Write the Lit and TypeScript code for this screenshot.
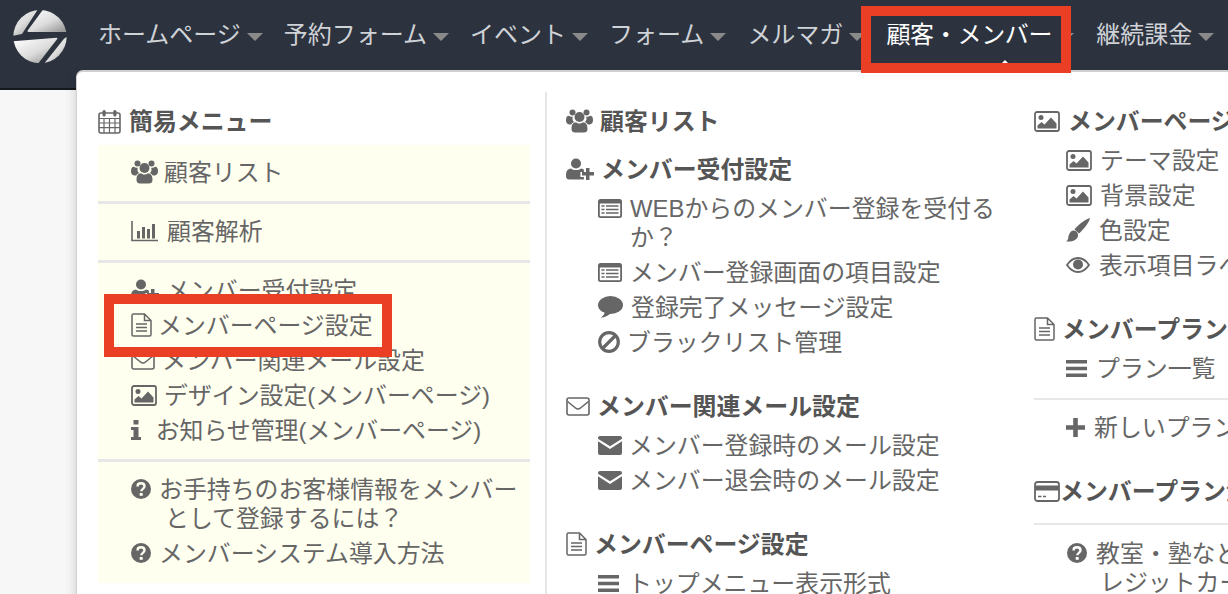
import { LitElement, html, css, svg } from "lit";
import { customElement } from "lit/decorators.js";

const C = "#666";
type Ic = { w: number; h: number; vb: string; gap: number; body: any };
const ICONS: Record<string, Ic> = {
  calendar: { w: 23, h: 25, vb: "0 0 23 25", gap: 8, body: svg`<rect x="1" y="4" width="21" height="20" rx="2" fill="none" stroke="${C}" stroke-width="1.6"/><path d="M1 9.5h21M1 14h21M1 18.7h21M6 9.5V24M11.5 9.5V24M17 9.5V24" fill="none" stroke="${C}" stroke-width="1.2"/><rect x="4.5" y="1" width="3.2" height="6.5" rx="1.5" fill="${C}"/><rect x="15.3" y="1" width="3.2" height="6.5" rx="1.5" fill="${C}"/>` },
  users: { w: 27, h: 24, vb: "0 0 27 24", gap: 6, body: svg`<g fill="${C}"><circle cx="13.5" cy="8" r="5"/><path d="M5.5 20c0-5 1.700-6.500 4.500-6.800 1 .8 2.200 1.300 3.500 1.300s2.500-.5 3.500-1.300c2.800.3 4.500 1.800 4.500 6.800 0 2.500-1.500 3.500-3.500 3.500H9c-2 0-3.500-1-3.500-3.500z"/><circle cx="6.500" cy="3.400" r="3"/><circle cx="20.500" cy="3.400" r="3"/><path d="M0 11c0-3 1-4.200 3-4.300.7.600 1.500 1 2.600 1h1.200c-.8 2.500 0 4.500 1.500 5.300-1.500.5-2.500 1.500-3.100 2.600C2 15.600 0 14.600 0 11zM27 11c0-3-1-4.200-3-4.300-.7.600-1.500 1-2.600 1h-1.200c.8 2.500 0 4.500-1.500 5.300 1.500.5 2.500 1.500 3.100 2.600C25 15.600 27 14.600 27 11z"/></g>` },
  userPlus: { w: 28, h: 22, vb: "0 0 28 22", gap: 7, body: svg`<g fill="${C}"><circle cx="10" cy="5.500" r="5"/><path d="M0 18c0-5 1.500-7 5-7.500 1.200 1 3 1.600 5 1.600s3.800-.6 5-1.600c1.200.2 2.100.5 2.900 1.100V14h-3.500v5h3.500v2.500H3c-2 0-3-1.300-3-3.500z"/><path d="M20 10h3.500v4H28v3.500h-4.500V22H20v-4.500h-4V14h4z"/></g>` },
  chart: { w: 27, h: 22, vb: "0 0 27 22", gap: 9, body: svg`<path d="M1 1v19.500h26" fill="none" stroke="${C}" stroke-width="1.600"/><g fill="${C}"><rect x="6" y="11" width="3" height="7.500"/><rect x="11" y="7" width="3" height="11.500"/><rect x="16" y="9" width="3" height="9.500"/><rect x="21" y="4" width="3" height="14.500"/></g>` },
  file: { w: 21, h: 24, vb: "0 0 21 24", gap: 7, body: svg`<path d="M1 2.500A1.500 1.500 0 0 1 2.500 1H13.500L20 7.500V21.500A1.500 1.500 0 0 1 18.500 23H2.500A1.500 1.500 0 0 1 1 21.500zM13.500 1V7.500H20" fill="none" stroke="${C}" stroke-width="1.500"/><path d="M5 11h11M5 14.500h11M5 18h11" stroke="${C}" stroke-width="1.500"/>` },
  mail: { w: 24, h: 19, vb: "0 0 24 19", gap: 7, body: svg`<rect x="1" y="1" width="22" height="17" rx="2" fill="none" stroke="${C}" stroke-width="1.600"/><path d="M1.500 4.500L9.500 11c1.500 1.200 3.500 1.200 5 0L22.500 4.500" fill="none" stroke="${C}" stroke-width="1.600"/>` },
  mailFill: { w: 24, h: 19, vb: "0 0 24 19", gap: 7, body: svg`<path d="M0 5.200L12 13l12-7.800V17a2 2 0 0 1-2 2H2a2 2 0 0 1-2-2zM2 0h20a2 2 0 0 1 2 2v.8L12 10.300 0 2.800V2a2 2 0 0 1 2-2z" fill="${C}"/>` },
  pic: { w: 26, h: 21, vb: "0 0 26 21", gap: 8, body: svg`<rect x="1" y="1" width="24" height="19" rx="2" fill="none" stroke="${C}" stroke-width="1.800"/><circle cx="7" cy="6.500" r="2.500" fill="${C}"/><path d="M3.500 17.500v-3l4-3.500 3 2.500 6.500-7 5.500 6v5z" fill="${C}"/>` },
  info: { w: 10, h: 20, vb: "0 0 10 20", gap: 8, body: svg`<path d="M2.500 0h5v4.500h-5zM0 7h7.500v10H10v3H0v-3h2.500v-7H0z" fill="${C}"/>` },
  question: { w: 20, h: 20, vb: "0 0 20 20", gap: 8, body: svg`<circle cx="10" cy="10" r="10" fill="${C}"/><path d="M6.500 7.500c0-2 1.600-3.200 3.500-3.200s3.500 1.200 3.500 3c0 2.600-3.200 2.500-3.200 5" fill="none" stroke="#fffff0" stroke-width="2.400"/><rect x="8.700" y="14" width="3" height="2.800" fill="#fffff0"/>` },
  questionW: { w: 20, h: 20, vb: "0 0 20 20", gap: 9, body: svg`<circle cx="10" cy="10" r="10" fill="${C}"/><path d="M6.500 7.500c0-2 1.600-3.200 3.500-3.200s3.500 1.200 3.500 3c0 2.600-3.200 2.500-3.200 5" fill="none" stroke="#fff" stroke-width="2.400"/><rect x="8.700" y="14" width="3" height="2.800" fill="#fff"/>` },
  list: { w: 24, h: 19, vb: "0 0 24 19", gap: 8, body: svg`<rect width="24" height="19" rx="2.500" fill="${C}"/><rect x="1.800" y="4.500" width="20.400" height="12.700" fill="#fff"/><path d="M3.500 7h3M3.500 10.500h3M3.500 14h3M8 7h12.500M8 10.500h12.500M8 14h12.500" stroke="${C}" stroke-width="1.700"/>` },
  comment: { w: 25, h: 22, vb: "0 0 25 22", gap: 8, body: svg`<ellipse cx="12.500" cy="9" rx="12.500" ry="9" fill="${C}"/><path d="M7 15c0 2.500-1.500 4.500-4 6.800 3.500-.5 7.500-2 10-4.800z" fill="${C}"/>` },
  ban: { w: 22, h: 22, vb: "0 0 22 22", gap: 7, body: svg`<circle cx="11" cy="11" r="9.300" fill="none" stroke="${C}" stroke-width="3.200"/><path d="M4.500 17.500L17.500 4.500" stroke="${C}" stroke-width="3.200"/>` },
  bars: { w: 21, h: 17, vb: "0 0 21 17", gap: 9, body: svg`<path d="M0 0h21v3.500H0zM0 6.700h21v3.500H0zM0 13.500h21V17H0z" fill="${C}"/>` },
  brush: { w: 24, h: 24, vb: "0 0 24 24", gap: 9, body: svg`<path d="M24 0c0 3-6 11-11 15.500l-4.500-4C12 6.500 21 .5 24 0z" fill="${C}"/><path d="M7.500 12.500c3 .2 5 2.500 4.500 5.500-.6 3.700-5 6-12 5.500 3.200-2 1.500-4 3.200-7.300C4.100 14 5.700 12.500 7.500 12.500z" fill="${C}"/>` },
  eye: { w: 24, h: 16, vb: "0 0 24 16", gap: 9, body: svg`<path d="M1 8c3-4.500 6.800-7 11-7s8 2.500 11 7c-3 4.500-6.800 7-11 7S4 12.500 1 8z" fill="none" stroke="${C}" stroke-width="1.800"/><circle cx="12" cy="7.500" r="5" fill="${C}"/>` },
  plus: { w: 19, h: 19, vb: "0 0 19 19", gap: 9, body: svg`<path d="M7.200 0h4.600v7.200H19v4.600h-7.200V19H7.200v-7.200H0V7.200h7.200z" fill="${C}"/>` },
  card: { w: 26, h: 21, vb: "0 0 26 21", gap: 0, body: svg`<rect x="1" y="1" width="24" height="19" rx="2.500" fill="none" stroke="${C}" stroke-width="1.800"/><rect x="1" y="4.500" width="24" height="5" fill="${C}"/><path d="M4 15.500h3.500M9 15.500h3" stroke="${C}" stroke-width="1.500"/>` },
};

const ic = (name: string, gap?: number) => {
  const i = ICONS[name];
  return html`<svg class="ic" width=${i.w} height=${i.h} viewBox=${i.vb} style="vertical-align:${9 - i.h / 2}px;margin-right:${gap ?? i.gap}px">${i.body}</svg>`;
};

const NAV = ["ホームページ", "予約フォーム", "イベント", "フォーム", "メルマガ", "顧客・メンバー", "継続課金"];

@customElement("app-root")
export class AppRoot extends LitElement {
  static styles = css`
    :host {
      display: block;
      width: 1228px;
      height: 594px;
      overflow: hidden;
      position: relative;
      background: #f7f7f7;
      font-family: "Liberation Sans", "Noto Sans CJK JP", sans-serif;
      font-size: 24px;
      line-height: 29px;
      color: #666;
    }
    svg { display: inline-block; }
    header {
      height: 88px;
      background: #2c333f;
      border-bottom: 2px solid #15181d;
      display: flex;
      align-items: flex-start;
      white-space: nowrap;
    }
    .logo { margin: 4px 26px 0 8px; flex: none; }
    nav { display: flex; gap: 21px; padding-top: 20px; }
    .nav-item {
      display: flex;
      align-items: center;
      gap: 6px;
      color: #cfd2d6;
      position: relative;
    }
    .caret {
      width: 0; height: 0;
      border-left: 8px solid transparent;
      border-right: 8px solid transparent;
      border-top: 8px solid #8a8a8a;
      margin-top: 4px;
      position: relative;
    }
    .nav-item.on { color: #fff; z-index: 2; letter-spacing: -0.3px; margin-right: 1px; }
    .nav-item.on .caret { z-index: -2; }
    .nav-item.on::before {
      content: "";
      position: absolute;
      z-index: -1;
      left: -25px;
      top: -14px;
      width: 190px;
      height: 47px;
      border: 10px solid #ea3f24;
      background: #2c333f;
    }
    .cursor {
      position: absolute;
      left: 116px;
      top: 40px;
      width: 0; height: 0;
      border-left: 3px solid transparent;
      border-right: 3px solid transparent;
      border-bottom: 3px solid #fff;
    }
    .panel {
      position: absolute;
      left: 76px;
      top: 70px;
      width: 1300px;
      height: 700px;
      box-sizing: border-box;
      background: #fff;
      border: 1px solid #d0d0d0;
      border-top-width: 2px;
      border-radius: 7px;
      box-shadow: 0 6px 12px rgba(0, 0, 0, .18);
      z-index: 1;
      display: flex;
      padding: 20px 0 0 21px;
      font-size: 23.9px;
    }
    .col1 { width: 432px; flex: none; padding-top: 15px; }
    .col2 {
      width: 455px;
      flex: none;
      margin-left: 15px;
      padding: 15px 0 0 19px;
      border-left: 2px solid #e5e5e5;
    }
    .col3 { width: 266px; flex: none; margin-left: 13px; padding-top: 15px; }
    .title { font-weight: bold; color: #555; margin-bottom: 10px; white-space: nowrap; }
    .title.solo { margin-bottom: 19px; }
    .cream {
      background: #fffff0;
      height: 438px;
      box-sizing: border-box;
      margin-top: -1px;
      padding-top: 13px;
    }
    .sec { padding: 0 0 0 33px; }
    .row { margin: 0 0 6px; position: relative; }
    .sub { padding-left: 64px; text-indent: -32px; }
    .subw { padding-left: 34px; text-indent: -34px; }
    .subx { padding-left: 66px; text-indent: -33px; }
    .ic { text-indent: 0; }
    hr { border: 0; height: 3px; background: #e7e7e7; margin: 14px 0 13px; }
    .col3 hr { height: 2px; margin: 15px 0 13px; }
    .col3 .title + hr { margin: 17px 0 14px; }
    .group { margin-bottom: 35px; }
    .nw { white-space: nowrap; }
    .mark { z-index: 1; white-space: nowrap; }
    .mark::before {
      content: "";
      position: absolute;
      z-index: -1;
      left: -27px;
      top: -17px;
      width: 268px;
      height: 43px;
      border: 10px solid #ea3f24;
      background: #fffff0;
    }
  `;

  private logo() {
    return svg`<svg class="logo" width="64" height="64" viewBox="0 0 192 192">
      <defs>
        <linearGradient id="lg" x1="0.15" y1="0.1" x2="0.85" y2="0.9">
          <stop offset="0" stop-color="#fafafa"/><stop offset="0.55" stop-color="#dcdcdc"/><stop offset="1" stop-color="#9a9a9a"/>
        </linearGradient>
        <clipPath id="cp"><circle cx="96" cy="98" r="80"/></clipPath>
      </defs>
      <g clip-path="url(#cp)" fill="url(#lg)">
        <path d="M0 0H100L42 90L10 96V0z"/>
        <path d="M110 10H192V84L62 84Q56 84 60 78z"/>
        <path d="M10 112L146 101Q150 101 147 106L88 182H10z"/>
        <path d="M180 98V192H98L168 104Q173 99 180 98z"/>
      </g>
    </svg>`;
  }

  render() {
    return html`
      <header>
        ${this.logo()}
        <nav>
          ${NAV.map((n, i) => html`<div class="nav-item ${i === 5 ? "on" : ""}">${n}<span class="caret"></span>${i === 5 ? html`<span class="cursor"></span>` : ""}</div>`)}
        </nav>
      </header>
      <div class="panel">
        <div class="col1">
          <div class="title">${ic("calendar")}簡易メニュー</div>
          <div class="cream">
            <div class="sec"><div class="row">${ic("users")}顧客リスト</div></div>
            <hr />
            <div class="sec"><div class="row">${ic("chart")}顧客解析</div></div>
            <hr />
            <div class="sec">
              <div class="row">${ic("userPlus")}メンバー受付設定</div>
              <div class="row mark">${ic("file", 6)}メンバーページ設定</div>
              <div class="row">${ic("mail")}メンバー関連メール設定</div>
              <div class="row">${ic("pic", 7)}デザイン設定(メンバーページ)</div>
              <div class="row">${ic("info")}<span>&nbsp;お知らせ管理(メンバーページ)</span></div>
            </div>
            <hr />
            <div class="sec">
              <div class="row subw">${ic("question")}お手持ちのお客様情報をメンバーとして登録するには？</div>
              <div class="row">${ic("question")}メンバーシステム導入方法</div>
            </div>
          </div>
        </div>
        <div class="col2">
          <div class="title solo">${ic("users", 7)}顧客リスト</div>
          <div class="group">
            <div class="title">${ic("userPlus")}メンバー受付設定</div>
            <div class="row sub">${ic("list")}WEBからのメンバー登録を受付るか？</div>
            <div class="row sub">${ic("list")}メンバー登録画面の項目設定</div>
            <div class="row sub">${ic("comment")}登録完了メッセージ設定</div>
            <div class="row sub">${ic("ban")}ブラックリスト管理</div>
          </div>
          <div class="group">
            <div class="title">${ic("mail")}メンバー関連メール設定</div>
            <div class="row sub">${ic("mailFill")}メンバー登録時のメール設定</div>
            <div class="row sub">${ic("mailFill")}メンバー退会時のメール設定</div>
          </div>
          <div class="group">
            <div class="title">${ic("file")}メンバーページ設定</div>
            <div class="row sub">${ic("bars")}トップメニュー表示形式</div>
          </div>
        </div>
        <div class="col3">
          <div class="group">
            <div class="title">${ic("pic")}メンバーページ設定</div>
            <div class="row sub nw">${ic("pic")}テーマ設定</div>
            <div class="row sub nw">${ic("pic")}背景設定</div>
            <div class="row sub nw">${ic("brush")}色設定</div>
            <div class="row sub nw">${ic("eye")}表示項目ラベル設定</div>
          </div>
          <div class="group">
            <div class="title">${ic("file")}メンバープラン設定</div>
            <div class="row sub nw">${ic("bars")}プラン一覧</div>
            <hr />
            <div class="row sub nw">${ic("plus")}新しいプラン</div>
          </div>
          <div class="group">
            <div class="title">${ic("card")}メンバープラン決済設定</div>
            <hr />
            <div class="row subx">${ic("questionW")}教室・塾などでクレジットカード決済</div>
          </div>
        </div>
      </div>
    `;
  }
}
